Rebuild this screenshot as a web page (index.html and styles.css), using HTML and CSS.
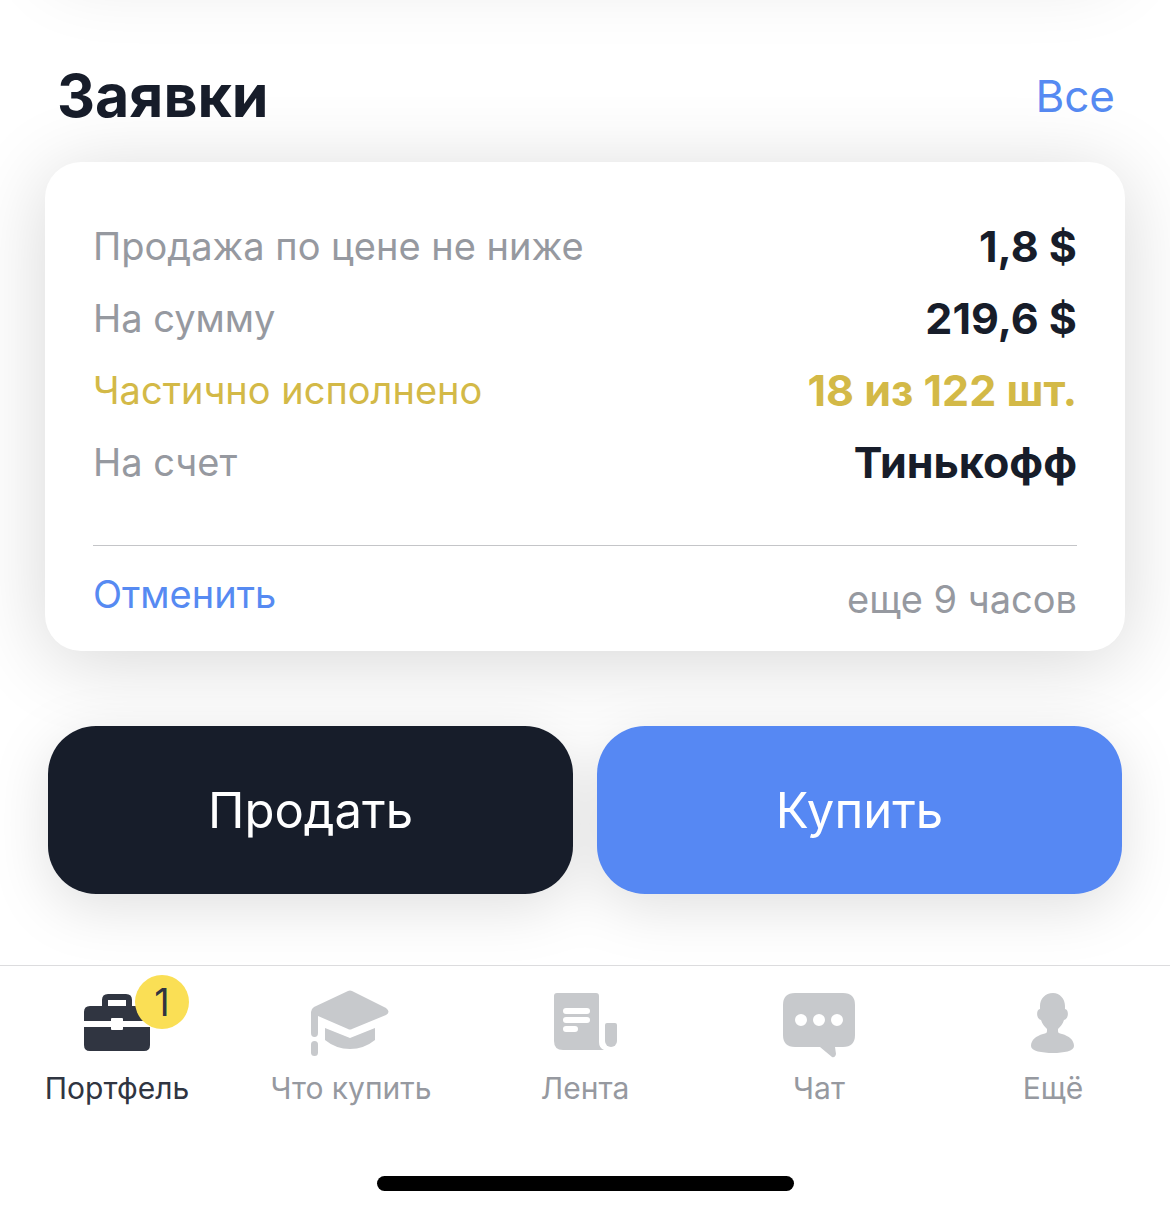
FILE: index.html
```
<!DOCTYPE html>
<html lang="ru">
<head>
    <meta charset="UTF-8">
    <meta name="viewport" content="width=device-width, initial-scale=1.0">
    <title>Заявки</title>
    <link rel="stylesheet" href="styles.css">
</head>
<body>
    <main class="content">
        <div class="previous-card"></div>

        <header class="section-header">
            <h1>Заявки</h1>
            <a href="#all">Все</a>
        </header>

        <section class="order-card">
            <dl class="order-details">
                <div class="row">
                    <dt>Продажа по цене не ниже</dt>
                    <dd>1,8 $</dd>
                </div>
                <div class="row">
                    <dt>На сумму</dt>
                    <dd>219,6 $</dd>
                </div>
                <div class="row partial">
                    <dt>Частично исполнено</dt>
                    <dd>18 из 122 шт.</dd>
                </div>
                <div class="row">
                    <dt>На счет</dt>
                    <dd>Тинькофф</dd>
                </div>
            </dl>
            <div class="order-footer">
                <button type="button" class="cancel">Отменить</button>
                <span class="time-left">еще 9 часов</span>
            </div>
        </section>

        <div class="actions">
            <button type="button" class="sell">Продать</button>
            <button type="button" class="buy">Купить</button>
        </div>
    </main>

    <footer class="bottom">
        <nav class="tabs">
            <a href="#portfolio" class="tab active">
                <span class="icon">
                    <svg viewBox="0 0 90 72" aria-hidden="true">
                        <path fill-rule="evenodd" d="M30 19v-6q0-6 6-6h18q6 0 6 6v6h12q6 0 6 6v9H51v-2q0-1-1-1H40q-1 0-1 1v2H12v-9q0-6 6-6zM36 13v6h18v-6z"/>
                        <path d="M12 40h27v2q0 1 1 1h10q1 0 1-1v-2h27v18q0 6-6 6H18q-6 0-6-6z"/>
                    </svg>
                    <span class="badge">1</span>
                </span>
                Портфель
            </a>
            <a href="#ideas" class="tab">
                <span class="icon">
                    <svg viewBox="0 0 90 72" aria-hidden="true">
                        <path d="M42 4q2-1 4 0l34 17q5 4 0 7L46 42q-2 1-4 0L12 29v17q0 4-3.500 4T5 46V25q0-3 3-5z"/>
                        <path d="M19 41l25 10 25-10v12q-11 9-25 9t-25-9z"/>
                        <rect x="5" y="54" width="7" height="15" rx="3.500"/>
                    </svg>
                </span>
                Что купить
            </a>
            <a href="#feed" class="tab">
                <span class="icon">
                    <svg viewBox="0 0 90 72" aria-hidden="true">
                        <path fill-rule="evenodd" d="M17 6h39q3 0 3 3v46q0 6 5 8H23q-9 0-9-9V9q0-3 3-3zM26 21a3 3 0 0 0 0 6h21a3 3 0 0 0 0-6zM26 30a3 3 0 0 0 0 6h21a3 3 0 0 0 0-6zM26 39a3 3 0 0 0 0 6h9a3 3 0 0 0 0-6z"/>
                        <path d="M67 36h8q2 0 2 2v16a6 6 0 0 1-12 0V38q0-2 2-2z"/>
                    </svg>
                </span>
                Лента
            </a>
            <a href="#chat" class="tab">
                <span class="icon">
                    <svg viewBox="0 0 90 72" aria-hidden="true">
                        <path fill-rule="evenodd" d="M21 6h48q12 0 12 12v30q0 12-12 12h-8l1 7q-1 4-4 3L46 60H21Q9 60 9 48V18Q9 6 21 6zM21 33a6 6 0 0 0 12 0 6 6 0 0 0-12 0zM39 33a6 6 0 0 0 12 0 6 6 0 0 0-12 0zM57 33a6 6 0 0 0 12 0 6 6 0 0 0-12 0z"/>
                    </svg>
                </span>
                Чат
            </a>
            <a href="#more" class="tab">
                <span class="icon">
                    <svg viewBox="0 0 90 72" aria-hidden="true">
                        <path d="M45 6C37 6 32 12 32 19v3c-4 0-4 10 1 11 1 4 4 7 6 9v2c0 2-1 2-4 3-7 2-12 6-12 12 0 5 11 7 22 7s21-2 21-7c0-6-5-10-12-12-3-1-4-1-4-3v-2c2-2 5-5 6-9 5-1 5-11 1-11v-3c0-7-5-13-12-13z"/>
                    </svg>
                </span>
                Ещё
            </a>
        </nav>
        <div class="home-indicator"></div>
    </footer>
</body>
</html>
```
FILE: styles.css
```
* {
    box-sizing: border-box;
}
body {
    margin: 0;
    min-height: 100vh;
    display: flex;
    flex-direction: column;
    overflow-x: hidden;
    background-color: #fff;
    color: #171d2a;
    font-family: Inter, "Liberation Sans", sans-serif;
}
a {
    text-decoration: none;
}
button {
    border: 0;
    padding: 0;
    font-family: inherit;
    cursor: pointer;
}
.content {
    flex: 1;
    display: flex;
    flex-direction: column;
    padding: 0 45px 71px;
}
/* scrolled away, only its shadow is still visible */
.previous-card {
    height: 100px;
    margin-top: -124px;
    border-radius: 36px;
    box-shadow: 0 8px 72px rgba(0, 0, 0, 0.09);
}
.section-header {
    display: flex;
    justify-content: space-between;
    align-items: center;
    margin-top: 82px;
    padding: 0 10px 0 12px;
}
.section-header h1 {
    margin: 0;
    font-size: 59px;
    line-height: 76px;
}
.section-header a {
    color: #568af2;
    font-size: 44px;
}
.order-card {
    margin-top: 28px;
    padding: 48px 48px 20px;
    border-radius: 36px;
    background-color: #fff;
    box-shadow: 0 10px 80px rgba(0, 0, 0, 0.16);
}
.order-details {
    margin: 0;
    padding-bottom: 47px;
    border-bottom: 1px solid #c4c5c8;
}
.row {
    display: flex;
    justify-content: space-between;
    font-size: 38px;
    line-height: 72px;
}
.row dt {
    color: #9699a0;
}
.row dd {
    margin: 0;
    font-size: 43px;
    font-weight: 700;
}
.partial dt,
.partial dd {
    color: #d3b947;
}
.order-footer {
    display: flex;
    justify-content: space-between;
    align-items: flex-start;
    padding: 22px 0 1px;
    font-size: 38px;
}
.cancel {
    background: none;
    color: #568af2;
    font-size: 38px;
    line-height: 52px;
}
.time-left {
    color: #9699a0;
    line-height: 62px;
}
/* one shadow for the pair, so it never falls on a button */
.actions {
    display: flex;
    gap: 24px;
    margin-top: 75px;
    padding: 0 3px;
    filter: drop-shadow(0 14px 28px rgba(0, 0, 0, 0.12));
}
.actions button {
    flex: 1;
    height: 168px;
    border-radius: 48px;
    color: #fff;
    font-size: 49px;
}
.actions .sell {
    background-color: #171d2a;
}
.actions .buy {
    background-color: #5688f3;
}
.bottom {
    position: relative;
    padding: 21px 0 24px;
    border-top: 1px solid #dcdcde;
    background-color: #fff;
}
.tabs {
    display: grid;
    grid-template-columns: repeat(5, 1fr);
}
.tab {
    display: flex;
    flex-direction: column;
    align-items: center;
    gap: 9px;
    color: #9699a0;
    font-size: 30px;
    line-height: 40px;
    white-space: nowrap;
}
.tab.active {
    color: #303541;
}
.icon {
    position: relative;
    width: 90px;
    height: 72px;
    color: #c7c9cc;
}
.icon svg {
    display: block;
    fill: currentColor;
}
.active .icon {
    color: #303541;
}
.badge {
    position: absolute;
    top: -12px;
    left: 63px;
    width: 54px;
    height: 54px;
    border-radius: 50%;
    background-color: #fadf55;
    font-size: 38px;
    line-height: 54px;
    text-align: center;
}
.home-indicator {
    width: 417px;
    max-width: 60%;
    height: 15px;
    margin: 68px auto 0;
    border-radius: 8px;
    background-color: #000;
}
```
